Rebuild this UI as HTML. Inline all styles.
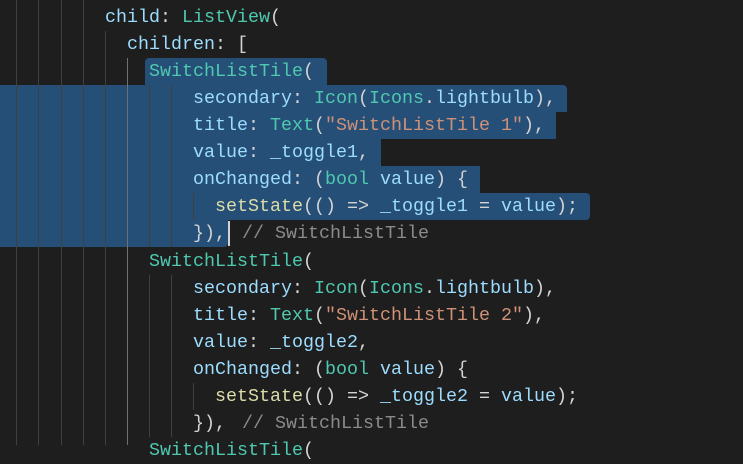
<!DOCTYPE html>
<html><head><meta charset="utf-8"><style>
html,body{margin:0;padding:0;background:#1e1e1e;width:743px;height:445px;overflow:hidden}
.l{position:absolute;left:6px;height:27px;line-height:27px;font-family:"Liberation Mono",monospace;font-size:18.33px;white-space:pre;color:#d4d4d4}
.s{position:absolute;background:#264f78;height:27.2px}
.g{position:absolute;width:1px;background:#404040}
.p{color:#9cdcfe}.c{color:#4ec9b0}.str{color:#ce9178}.f{color:#dcdcaa}.cm{color:#8b8b8b;margin-left:5px}
</style></head><body>
<div class="s" style="left:145px;top:58px;width:182px;border-radius:4px 4px 0 0"></div>
<div class="s" style="left:0;top:85px;width:567px;border-radius:0 4px 0 0"></div>
<div class="s" style="left:0;top:112px;width:556px"></div>
<div class="s" style="left:0;top:139px;width:381px"></div>
<div class="s" style="left:0;top:166px;width:480px"></div>
<div class="s" style="left:0;top:193px;width:590px;border-radius:0 4px 4px 0"></div>
<div class="s" style="left:0;top:220px;width:228px;border-radius:0 0 4px 0"></div>
<div style="position:absolute;left:228px;top:221px;width:2px;height:25px;background:#d4d4d4"></div>
<div class="g" style="left:16px;top:0;height:445px"></div>
<div class="g" style="left:38px;top:0;height:445px"></div>
<div class="g" style="left:61px;top:0;height:445px"></div>
<div class="g" style="left:83px;top:0;height:445px"></div>
<div class="g" style="left:105px;top:31px;height:414px"></div>
<div class="g" style="left:127px;top:58px;height:387px;background:#707070"></div>
<div class="g" style="left:149px;top:85px;height:162px"></div>
<div class="g" style="left:171px;top:85px;height:162px"></div>
<div class="g" style="left:149px;top:275px;height:162px"></div>
<div class="g" style="left:171px;top:275px;height:162px"></div>
<div class="g" style="left:193px;top:193px;height:27px"></div>
<div class="g" style="left:193px;top:383px;height:27px"></div>
<div class="l" style="top:4px">         <span class="p">child</span>: <span class="c">ListView</span>(</div>
<div class="l" style="top:31px">           <span class="p">children</span>: [</div>
<div class="l" style="top:58px">             <span class="c">SwitchListTile</span>(</div>
<div class="l" style="top:85px">                 <span class="p">secondary</span>: <span class="c">Icon</span>(<span class="c">Icons</span>.<span class="p">lightbulb</span>),</div>
<div class="l" style="top:112px">                 <span class="p">title</span>: <span class="c">Text</span>(<span class="str">"SwitchListTile 1"</span>),</div>
<div class="l" style="top:139px">                 <span class="p">value</span>: <span class="p">_toggle1</span>,</div>
<div class="l" style="top:166px">                 <span class="p">onChanged</span>: (<span class="c">bool</span> <span class="p">value</span>) {</div>
<div class="l" style="top:193px">                   <span class="f">setState</span>(() =&gt; <span class="p">_toggle1</span> = <span class="p">value</span>);</div>
<div class="l" style="top:220px">                 }), <span class="cm">// SwitchListTile</span></div>
<div class="l" style="top:248px">             <span class="c">SwitchListTile</span>(</div>
<div class="l" style="top:275px">                 <span class="p">secondary</span>: <span class="c">Icon</span>(<span class="c">Icons</span>.<span class="p">lightbulb</span>),</div>
<div class="l" style="top:302px">                 <span class="p">title</span>: <span class="c">Text</span>(<span class="str">"SwitchListTile 2"</span>),</div>
<div class="l" style="top:329px">                 <span class="p">value</span>: <span class="p">_toggle2</span>,</div>
<div class="l" style="top:356px">                 <span class="p">onChanged</span>: (<span class="c">bool</span> <span class="p">value</span>) {</div>
<div class="l" style="top:383px">                   <span class="f">setState</span>(() =&gt; <span class="p">_toggle2</span> = <span class="p">value</span>);</div>
<div class="l" style="top:410px">                 }), <span class="cm">// SwitchListTile</span></div>
<div class="l" style="top:437px">             <span class="c">SwitchListTile</span>(</div>
</body></html>
